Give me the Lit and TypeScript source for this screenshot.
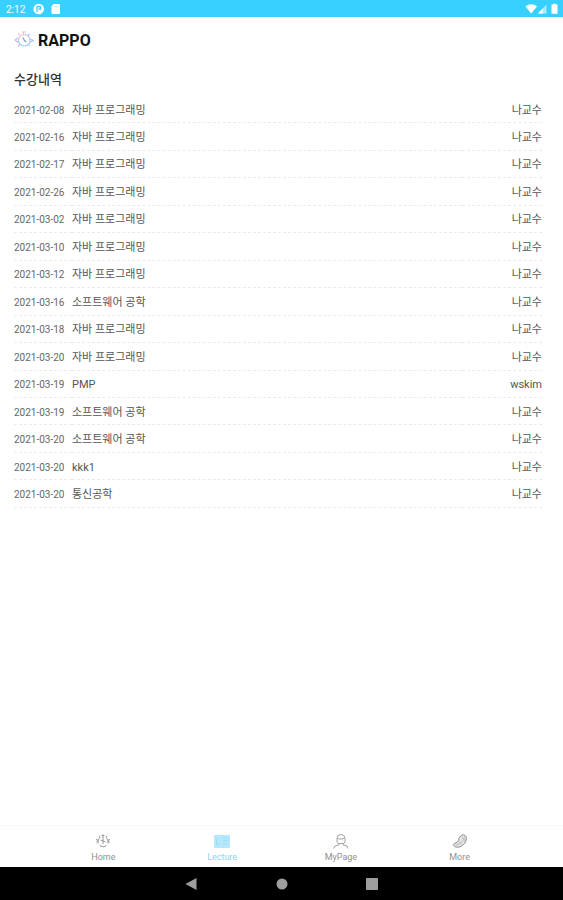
import { LitElement, html, css, svg } from "lit";
import { customElement, property } from "lit/decorators.js";
import { classMap } from "lit/directives/class-map.js";

const JAVA = "자바 프로그래밍";
const SW = "소프트웨어 공학";
const PROF = "나교수";

const LECTURES: [string, string, string][] = [
  ["2021-02-08", JAVA, PROF],
  ["2021-02-16", JAVA, PROF],
  ["2021-02-17", JAVA, PROF],
  ["2021-02-26", JAVA, PROF],
  ["2021-03-02", JAVA, PROF],
  ["2021-03-10", JAVA, PROF],
  ["2021-03-12", JAVA, PROF],
  ["2021-03-16", SW, PROF],
  ["2021-03-18", JAVA, PROF],
  ["2021-03-20", JAVA, PROF],
  ["2021-03-19", "PMP", "wskim"],
  ["2021-03-19", SW, PROF],
  ["2021-03-20", SW, PROF],
  ["2021-03-20", "kkk1", PROF],
  ["2021-03-20", "통신공학", PROF],
];

const ICONS = {
  home: svg`
    <g fill="none" stroke="#999" stroke-width="1">
      <path d="M5 4.200A5.400 5.400 0 0 0 3.200 10.500M4.800 12.600a5.400 5.400 0 0 0 6.600 0M12.900 10.500A5.400 5.400 0 0 0 11 4.200"/>
      <path d="M8 1.500v6.500l2.500 1M8 8v3M5.500 7L8 8M1 6.500l2.200.8L1.500 9.500M15 6.500l-2.200.8 1.700 2.200M4 2.800l1 1.400M12 2.800l-1 1.400M6.500 2.500h3"/>
    </g>`,
  lecture: svg`
    <rect x="0" y="2" width="16" height="13" rx="1" fill="#b5e8fd"/>
    <path d="M2.500 5.500v6h3M9 5h4.500M9 8h4.500M9 11h4.500" fill="none" stroke="#98dcfa" stroke-width="1"/>`,
  mypage: svg`
    <g fill="none" stroke="#8a8a8a" stroke-width=".8">
      <path d="M4 9V5.500a4 4 0 0 1 8 0V9l-1.500 1.500h-5z"/>
      <path d="M4.500 5.500c2 .8 5 .8 7-.5M6 10.500v1.300l-4 1.200-1.200 2.500M10 10.500v1.300l4 1.200 1.200 2.500"/>
    </g>`,
  more: svg`
    <path d="M11.500 1.800c2.500.4 3.500 3 2.500 5.700-1.200 3.800-4.800 6.700-8.500 6.700-2.600 0-4.500-1.500-3.700-3.200.8-1.600 3-.8 4.200-2.500 1-1.500.2-2.700 1.500-4.200 1.100-1.400 2.500-2.700 4-2.500z" fill="#e4e4e4" stroke="#888" stroke-width="1"/>
    <path d="M12.500 4c-.5 3-2 4-3.500 5.500S6 12 3.500 12M10 4l3 4M7.500 8.500l2 3" fill="none" stroke="#aaa" stroke-width=".7"/>`,
};

@customElement("status-bar")
class StatusBar extends LitElement {
  static styles = css`
    :host {
      display: flex;
      align-items: center;
      justify-content: space-between;
      height: 17px;
      padding: 0 4px 0 6px;
      background: #38d0ff;
      color: #fff;
      font-size: 10px;
      line-height: 17px;
    }
    .side { display: flex; align-items: center; height: 17px; }
    .time { width: 27px; padding-top: 2px; }
    svg { display: block; margin-top: 1px; }
  `;
  render() {
    return html`
      <div class="side">
        <span class="time">2:12</span>
        <svg width="30" height="12" viewBox="0 0 30 12" aria-hidden="true">
          <circle cx="5.700" cy="6" r="5.300" fill="#fff"/>
          <path d="M4 9V3.500M4 3.500h3.500v2.500H5.500" fill="none" stroke="#38d0ff" stroke-width="1.300"/>
          <path d="M20.500 1h5.500a1 1 0 0 1 1 1v8a1 1 0 0 1-1 1h-6.500a1 1 0 0 1-1-1V3.500z" fill="#fff"/>
          <path d="M21 2.500v2M23 2.500v2M25 2.500v2" stroke="#9ce6ff" stroke-width=".8"/>
        </svg>
      </div>
      <svg width="34" height="12" viewBox="0 0 34 12" aria-hidden="true">
        <path d="M0.500 3.500C4 .6 8.500.6 12 3.500L6.200 10.500z" fill="#fff"/>
        <path d="M13 10.500L21.500 1.500v9z" fill="#fff" opacity=".55"/>
        <path d="M13 10.500L18 5.300v5.200z" fill="#fff"/>
        <path d="M26.500 1.500H28V.800h3v.700h1.500v9.200h-6z" fill="#fff"/>
      </svg>
    `;
  }
}

@customElement("lecture-table")
class LectureTable extends LitElement {
  @property({ attribute: false }) rows: [string, string, string][] = [];
  static styles = css`
    :host { display: block; }
    table {
      width: 100%;
      height: 412px;
      border-collapse: collapse;
      table-layout: fixed;
      color: #555;
      font-size: 11px;
      line-height: 16px;
    }
    td {
      padding: 3px 0 0;
      border-bottom: 1px dashed #ebebeb;
      text-align: left;
      white-space: nowrap;
    }
    .date { width: 58px; color: #666; font-size: 10px; }
    .professor { width: 80px; text-align: right; }
  `;
  render() {
    return html`
      <table aria-label="수강내역">
        <tbody>
          ${this.rows.map(
            ([date, course, professor]) => html`
              <tr>
                <td class="date">${date}</td>
                <td>${course}</td>
                <td class="professor">${professor}</td>
              </tr>`
          )}
        </tbody>
      </table>
    `;
  }
}

@customElement("tab-bar")
class TabBar extends LitElement {
  static styles = css`
    :host { display: block; }
    nav {
      display: flex;
      height: 41px;
      padding: 0 44px;
      border-top: 1px solid #f7f7f7;
      background: #fff;
    }
    a {
      flex: 1;
      display: flex;
      flex-direction: column;
      align-items: center;
      gap: 2px;
      padding-top: 7px;
      color: #909090;
      font-size: 9px;
      line-height: 12px;
      text-decoration: none;
    }
    .active { color: #7fd8fc; }
  `;
  render() {
    const tabs = [
      ["Home", ICONS.home],
      ["Lecture", ICONS.lecture],
      ["MyPage", ICONS.mypage],
      ["More", ICONS.more],
    ] as const;
    return html`
      <nav>
        ${tabs.map(
          ([label, icon]) => html`
            <a href="#${label}" class=${classMap({ active: label === "Lecture" })}>
              <svg width="16" height="16" viewBox="0 0 16 16" aria-hidden="true">${icon}</svg>
              <span>${label}</span>
            </a>`
        )}
      </nav>
    `;
  }
}

@customElement("system-nav")
class SystemNav extends LitElement {
  static styles = css`
    :host {
      display: flex;
      justify-content: center;
      align-items: center;
      gap: 74px;
      height: 33px;
      background: #000;
    }
    button {
      width: 16px;
      height: 16px;
      padding: 0;
      border: 0;
      background: none;
    }
    svg { display: block; fill: #9e9e9e; }
  `;
  render() {
    return html`
      <button aria-label="Back"><svg width="16" height="16" viewBox="0 0 16 16"><path d="M1.500 8L12.500 2v12z"/></svg></button>
      <button aria-label="Home"><svg width="16" height="16" viewBox="0 0 16 16"><circle cx="8" cy="8" r="5.500"/></svg></button>
      <button aria-label="Recents"><svg width="16" height="16" viewBox="0 0 16 16"><rect x="2" y="2" width="12" height="12" rx="1"/></svg></button>
    `;
  }
}

@customElement("app-root")
class AppRoot extends LitElement {
  static styles = css`
    :host {
      display: flex;
      flex-direction: column;
      min-height: 100vh;
      background: #fff;
      font-family: Roboto, "Noto Sans CJK KR", sans-serif;
    }
    main { flex: 1; padding: 0 21px 0 14px; }
    .brand {
      display: flex;
      align-items: center;
      gap: 4px;
      height: 46px;
      color: #111;
      font-size: 16px;
      font-weight: 700;
    }
    h1 {
      margin: 0;
      padding: 7px 0 6px;
      color: #333;
      font-size: 13px;
      font-weight: 500;
      line-height: 20px;
    }
  `;
  render() {
    return html`
      <status-bar></status-bar>
      <main>
        <div class="brand">
          <svg width="20" height="18" viewBox="0 0 20 18" aria-hidden="true">
            <g fill="none" stroke-width="1.200">
              <path d="M4.500 9a6 6 0 0 1 6-5.500" stroke="#ecbcd4"/>
              <path d="M10.500 3.500a6 6 0 0 1 5.500 6" stroke="#c9bbe2"/>
              <path d="M16 9.500a6 6 0 0 1-5.500 5.500" stroke="#a0c2ec"/>
              <path d="M10.500 15a6 6 0 0 1-6-6" stroke="#a0d8e8"/>
              <path d="M4 2l2 2.500M9.500 1v3M8 1h4" stroke="#f0bcc8"/>
              <path d="M15.500 3l-1.500 1.500M16 8l3.500 1.500L16 11" stroke="#a8c8ee"/>
              <path d="M4 7L1 9l3 2.500M5.500 13l-1 2.500" stroke="#c6b9e6"/>
              <path d="M15 14l1 1.500" stroke="#a0d8e8"/>
              <path d="M9 6.500l1.500 3 1.800 1.500" stroke="#7d9cc9"/>
            </g>
          </svg>
          <span>RAPPO</span>
        </div>
        <h1>수강내역</h1>
        <lecture-table .rows=${LECTURES}></lecture-table>
      </main>
      <tab-bar></tab-bar>
      <system-nav></system-nav>
    `;
  }
}
